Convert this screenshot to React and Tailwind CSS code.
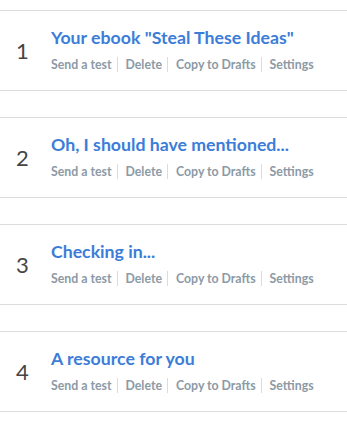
import React from 'react';

const emails = [
    { id: 1, title: 'Your ebook "Steal These Ideas"' },
    { id: 2, title: 'Oh, I should have mentioned...' },
    { id: 3, title: 'Checking in...' },
    { id: 4, title: 'A resource for you' },
];

const actions = ['Send a test', 'Delete', 'Copy to Drafts', 'Settings'];

const EmailRow = ({ index, title }) => (
    <div className="flex items-center h-[81px] border-y border-[#dddddd] bg-white mb-[26px]">
        <div className="w-[51px] pl-[16px] text-[22px] text-[#454545] font-normal leading-none">{index}</div>
        <div className="flex flex-col -mt-[2px]">
            <a className="text-[17.7px] font-bold text-[#3b7dd8] leading-[20px]">{title}</a>
            <div className="flex items-center mt-[9px]">
                {actions.map((label, i) => (
                    <span
                        key={label}
                        className={`text-[12.3px] font-bold text-[#8c9aa6] leading-[15px] ${i > 0 ? 'pl-[8px]' : ''} ${i < actions.length - 1 ? 'pr-[5px] border-r border-[#dcdcdc]' : ''}`}
                    >
                        {label}
                    </span>
                ))}
            </div>
        </div>
    </div>
);

export default function App() {
    return (
        <div className="w-[347px] h-[423px] bg-white pt-[10px] overflow-hidden" style={{ fontFamily: 'Lato, "Open Sans", sans-serif' }}>
            {emails.map((e) => (
                <EmailRow key={e.id} index={e.id} title={e.title} />
            ))}
        </div>
    );
}
